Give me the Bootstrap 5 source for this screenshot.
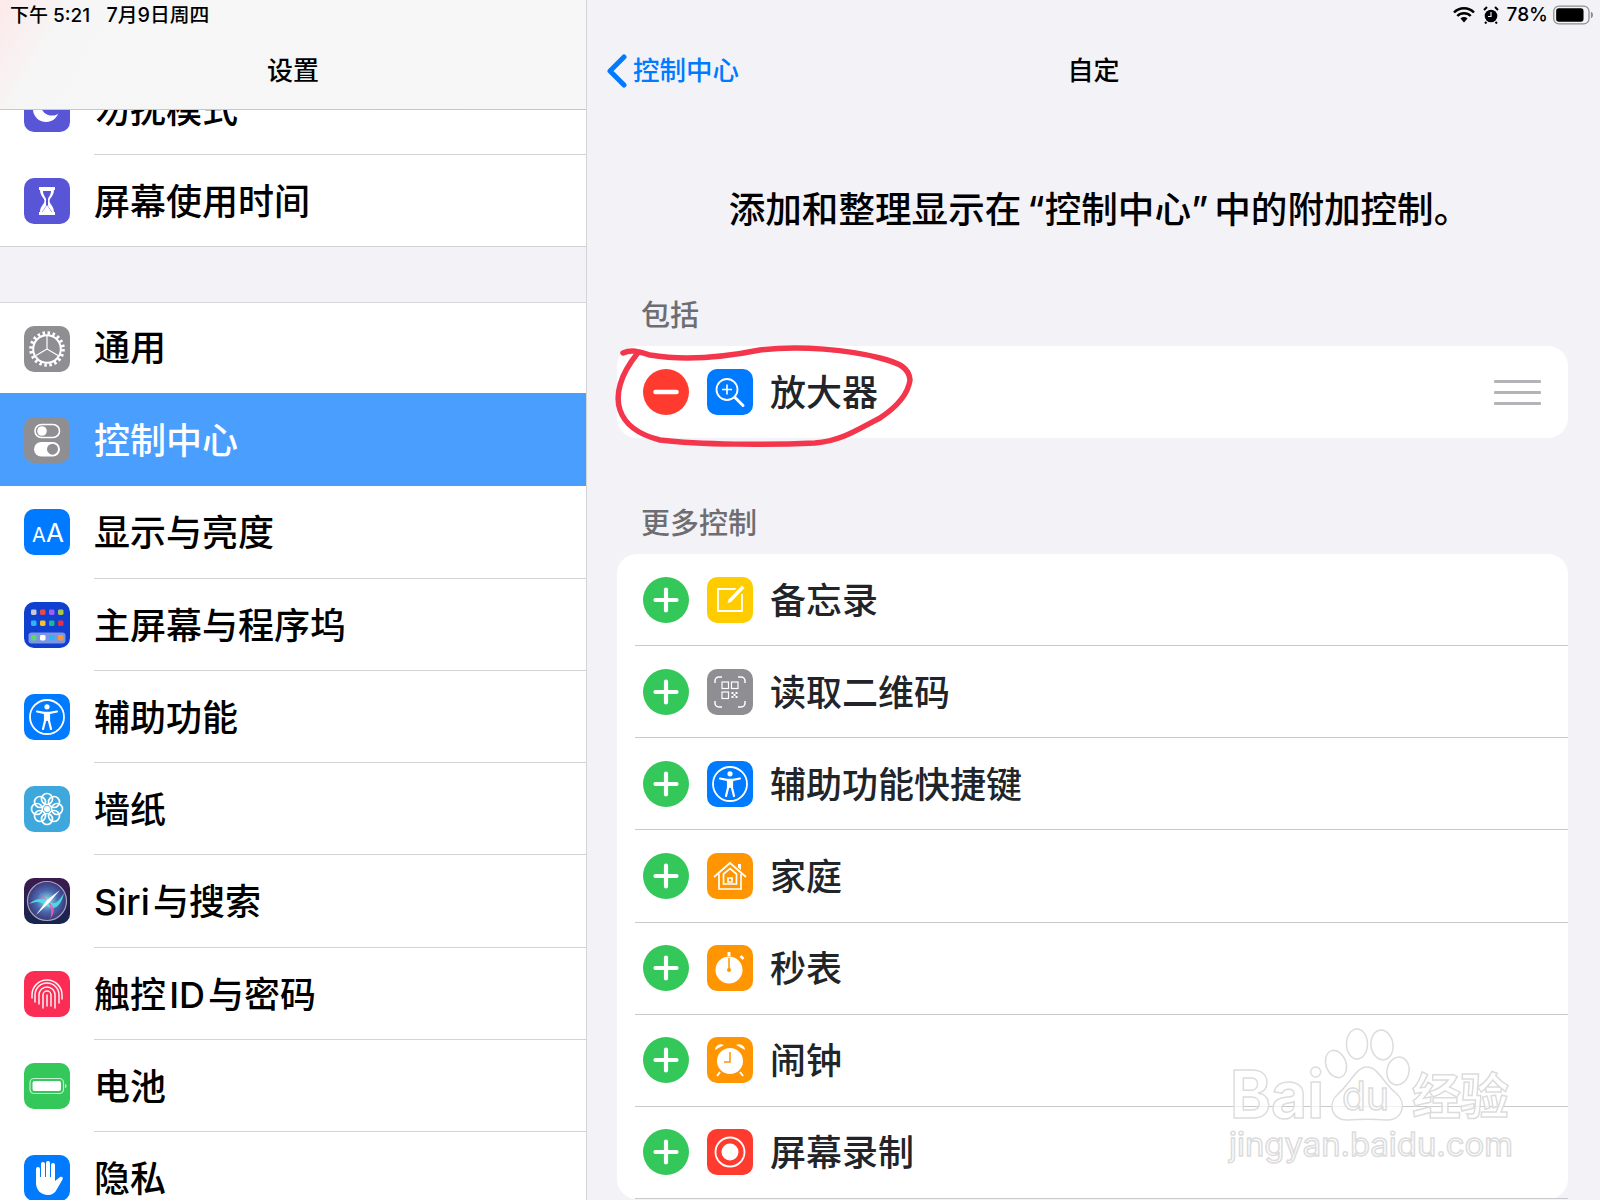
<!DOCTYPE html>
<html lang="zh-CN">
<head>
  <meta charset="UTF-8">
  <title>设置 - 控制中心</title>
  <link href="https://cdn.jsdelivr.net/npm/bootstrap@5.3.3/dist/css/bootstrap.min.css" rel="stylesheet">
  <style>
    html, body { height: 1200px; overflow: hidden; }
    body {
      font-family: Inter, "Noto Sans CJK SC", sans-serif;
      background: #f2f2f7;
      color: #000;
    }
    #ipad { width: 1600px; height: 1200px; }

    /* left pane */
    #left-pane { width: 587px; border-right: 1px solid #d3d3d8; }
    #left-head {
      height: 110px;
      background: linear-gradient(120deg, #fde9ea 0, #f6f6f6 12%, #f7f7f7 100%);
      border-bottom: 1px solid #c8c8cc;
      z-index: 2;
    }
    .stat-bar { height: 30px; font-size: 19px; line-height: 30px; font-weight: 500; }
    #stat-left { padding-left: 10px; }
    #stat-date { font-size: 19.8px; margin-left: 1px; }
    .nav-title { font-size: 26px; font-weight: 500; line-height: 81px; }
    #left-list { margin-top: -47px; }
    .set-group { background: #fff; border-radius: 0; }
    .set-group.first-group { border-bottom: 1px solid #d0d0d4; }
    .set-group.second-group { border-top: 1px solid #d8d8dc; margin-top: 55px; }
    .set-row.list-group-item {
      height: 92.25px;
      padding: 0 0 0 24px;
      border: 0;
      background: transparent;
      color: #000;
      font-size: 36px;
      font-weight: 500;
    }
    .set-row.short-row.list-group-item { height: 91px; }
    .second-group .short-row .set-text { line-height: 90px; }
    .set-row.list-group-item.active { background: #4a9ffe; color: #fff; height: 93px; }
    .active .set-text { line-height: 96px; }
    .set-icon, .app-icon { width: 46px; height: 46px; flex: none; display: block; }
    .set-text {
      margin-left: 24px;
      height: 100%;
      line-height: 95px;
      border-bottom: 1px solid #d4d4d8;
    }
    .no-sep { border-bottom: 0; }

    /* right pane */
    #back-link { color: #007aff; font-size: 26.5px; font-weight: 500; text-decoration: none; line-height: 81px; gap: 5px; padding-left: 19px; }
    #right-nav { display: grid; grid-template-columns: 1fr auto 1fr; }
    #stat-right { padding-right: 7px; gap: 8px; }
    #stat-right span { margin-right: -3px; }
    #desc { font-size: 36.6px; font-weight: 500; line-height: 50px; margin: 74px 0 61px; padding-left: 12px; text-align: center; }
    .quote-l { margin-left: 6px; }
    .quote-r { margin-right: 6px; }
    .sec-label { font-size: 29px; font-weight: 500; line-height: 40px; color: #6d6d72; margin: 0 0 10px 30px; padding-left: 24px; }
    .ctl-card {
      margin: 0 32px 0 30px;
      background: #fff;
      border-radius: 20px;
    }
    .ctl-card + .sec-label { margin-top: 66px; margin-bottom: 10px; }
    .ctl-row.list-group-item {
      height: 92.15px;
      margin-left: 18px;
      padding: 0 27px 0 8px;
      border: 0;
      border-bottom: 1px solid #c9c9cd;
      background: transparent;
      font-size: 36px;
      font-weight: 500;
      gap: 18px;
      border-radius: 0;
    }
    .ctl-row span { position: relative; top: 1px; left: -1px; }
    .ctl-row.no-line.list-group-item { border-bottom: 0; height: 92px; }
    .round-btn { width: 46px; height: 46px; flex: none; display: block; }
    #drag { width: 47px; margin-left: auto; }
    #drag i { display: block; height: 3px; background: #b4b4b8; margin: 8px 0; border-radius: 1px; }

    #overlay { position: absolute; left: 0; top: 0; z-index: 5; pointer-events: none; }
    .wm-text { fill: rgba(255,255,255,.72); stroke: #dcdcdc; stroke-width: 1.5; font-family: Inter, "Noto Sans CJK SC", sans-serif; }
  </style>
</head>
<body>

<svg width="0" height="0" class="d-block">
  <defs>
    <symbol id="a11y" viewBox="0 0 46 46">
      <rect width="46" height="46" rx="10" fill="#007aff"/>
      <circle cx="23" cy="23" r="17" fill="none" stroke="#fff" stroke-width="1.8"/>
      <circle cx="23" cy="12.8" r="2.6" fill="#fff"/>
      <path d="M13 17.5l7 1.3h6l7-1.3M23 19v7M21 19v8l-2 8M25 19v8l2 8" fill="none" stroke="#fff" stroke-width="2.2" stroke-linecap="round" stroke-linejoin="round"/>
    </symbol>
    <symbol id="plus" viewBox="0 0 46 46">
      <circle cx="23" cy="23" r="23" fill="#34c759"/>
      <path d="M23 12.5v21M12.5 23h21" stroke="#fff" stroke-width="4.2" stroke-linecap="round"/>
    </symbol>
    <radialGradient id="siriGlow" cx="50%" cy="50%" r="55%">
      <stop offset="0" stop-color="#8fe8ee"/><stop offset=".5" stop-color="#4a6ab0"/><stop offset="1" stop-color="#3a2a6a"/>
    </radialGradient>
    <linearGradient id="siriBg" x1="0" y1="0" x2="0" y2="1">
      <stop offset="0" stop-color="#3b1b4f"/><stop offset="1" stop-color="#16254d"/>
    </linearGradient>
  </defs>
</svg>

<div id="ipad" class="d-flex">

  <!-- settings list -->
  <div id="left-pane" class="d-flex flex-column overflow-hidden flex-shrink-0">
    <div id="left-head" class="position-relative flex-shrink-0">
      <div id="stat-left" class="stat-bar">下午 5:21 &nbsp; <span id="stat-date">7月9日周四</span></div>
      <div class="nav-title text-center">设置</div>
    </div>
    <div id="left-list">
      <div class="list-group set-group first-group">
        <div class="list-group-item set-row d-flex align-items-center">
          <svg class="set-icon" viewBox="0 0 46 46"><rect width="46" height="46" rx="10" fill="#5856d6"/><circle cx="22" cy="23" r="13" fill="#fff"/><circle cx="28" cy="18" r="11.5" fill="#5856d6"/></svg>
          <div class="set-text flex-grow-1">勿扰模式</div>
        </div>
        <div class="list-group-item set-row short-row d-flex align-items-center">
          <svg class="set-icon" viewBox="0 0 46 46"><rect width="46" height="46" rx="10" fill="#5856d6"/><path d="M15 9h16v3h-1c0 6-4.500 8-4.500 11s4.500 5 4.500 11h1v3H15v-3h1c0-6 4.500-8 4.500-11S16 18 16 12h-1z" fill="#fff"/><path d="M19 13h8c0 4-2.500 6-3 8v7l4 6h-10l4-6v-7c-.5-2-3-4-3-8z" fill="#5856d6"/><path d="M23 27l4.500 7h-9z" fill="#fff"/></svg>
          <div class="set-text flex-grow-1 no-sep">屏幕使用时间</div>
        </div>
      </div>
      <div class="list-group set-group second-group">
        <div class="list-group-item set-row short-row d-flex align-items-center">
          <svg class="set-icon" viewBox="0 0 46 46"><rect width="46" height="46" rx="10" fill="#8e8e93"/><circle cx="23" cy="23" r="16" fill="none" stroke="#fff" stroke-width="3.600" stroke-dasharray="2.500 2.530"/><circle cx="23" cy="23" r="13.800" fill="none" stroke="#fff" stroke-width="2"/><path d="M23 23V10M23 23l11 6.500M23 23l-11 6.500" stroke="#fff" stroke-width="1.200"/></svg>
          <div class="set-text flex-grow-1 no-sep">通用</div>
        </div>
        <div class="list-group-item set-row active d-flex align-items-center">
          <svg class="set-icon" viewBox="0 0 46 46"><rect width="46" height="46" rx="10" fill="#8e8e93"/><rect x="11" y="7.500" width="24.500" height="13" rx="6.500" fill="none" stroke="#fff" stroke-width="1.600"/><circle cx="18" cy="14" r="4.800" fill="#fff"/><rect x="10" y="25" width="26" height="14.500" rx="7.200" fill="#fff"/><circle cx="28.500" cy="32.200" r="5.500" fill="#8e8e93"/></svg>
          <div class="set-text flex-grow-1 no-sep">控制中心</div>
        </div>
        <div class="list-group-item set-row d-flex align-items-center">
          <svg class="set-icon" viewBox="0 0 46 46"><rect width="46" height="46" rx="10" fill="#007aff"/><text x="8" y="33" font-size="20" font-weight="400" fill="#fff" font-family="Inter">A</text><text x="22" y="33" font-size="26" font-weight="400" fill="#fff" font-family="Inter">A</text></svg>
          <div class="set-text flex-grow-1">显示与亮度</div>
        </div>
        <div class="list-group-item set-row d-flex align-items-center">
          <svg class="set-icon" viewBox="0 0 46 46"><rect width="46" height="46" rx="10" fill="#1040cf"/>
            <rect x="7" y="7.500" width="5.500" height="5.500" rx="1.400" fill="#c9c9d2"/><rect x="16" y="7.500" width="5.500" height="5.500" rx="1.400" fill="#e5484d"/><rect x="25" y="7.500" width="5.500" height="5.500" rx="1.400" fill="#a55bf5"/><rect x="34" y="7.500" width="5.500" height="5.500" rx="1.400" fill="#a7c94a"/>
            <rect x="7" y="18.500" width="5.500" height="5.500" rx="1.400" fill="#2ab6f5"/><rect x="16" y="18.500" width="5.500" height="5.500" rx="1.400" fill="#f6c026"/><rect x="25" y="18.500" width="5.500" height="5.500" rx="1.400" fill="#20b48f"/><rect x="34" y="18.500" width="5.500" height="5.500" rx="1.400" fill="#e5304a"/>
            <rect x="4.500" y="30.500" width="37" height="11" rx="3" fill="#7d95e4"/>
            <rect x="7" y="33" width="5.500" height="5.500" rx="1.400" fill="#5bd964"/><rect x="16" y="33" width="5.500" height="5.500" rx="1.400" fill="#fff"/><rect x="25" y="33" width="5.500" height="5.500" rx="1.400" fill="#27b5f5"/><rect x="34" y="33" width="5.500" height="5.500" rx="1.400" fill="#f59a3c"/></svg>
          <div class="set-text flex-grow-1">主屏幕与程序坞</div>
        </div>
        <div class="list-group-item set-row d-flex align-items-center">
          <svg class="set-icon"><use href="#a11y"/></svg>
          <div class="set-text flex-grow-1">辅助功能</div>
        </div>
        <div class="list-group-item set-row d-flex align-items-center">
          <svg class="set-icon" viewBox="0 0 46 46"><rect width="46" height="46" rx="10" fill="#3ea8dc"/><g fill="none" stroke="#fff" stroke-width="1.700"><circle cx="23" cy="13" r="5.500"/><circle cx="30" cy="16" r="5.500"/><circle cx="33" cy="23" r="5.500"/><circle cx="30" cy="30" r="5.500"/><circle cx="23" cy="33" r="5.500"/><circle cx="16" cy="30" r="5.500"/><circle cx="13" cy="23" r="5.500"/><circle cx="16" cy="16" r="5.500"/></g><circle cx="23" cy="23" r="3" fill="#fff"/></svg>
          <div class="set-text flex-grow-1">墙纸</div>
        </div>
        <div class="list-group-item set-row d-flex align-items-center">
          <svg class="set-icon" viewBox="0 0 46 46"><rect width="46" height="46" rx="10" fill="url(#siriBg)"/><circle cx="23" cy="23" r="19.500" fill="url(#siriGlow)" stroke="#a3a7bd" stroke-width="1.200"/><path d="M5 26c7-6 12-6 18-3s9 5 17-8c-2 11-9 19-17 13s-12-4-18-2z" fill="#4fe0e8" opacity=".9"/><path d="M13 8c3 8 7 11 10 15s6 11 3 18c8-9 2-15-3-18S16 15 13 8z" fill="#ee5bb0" opacity=".9"/><path d="M36 12L23 22 12 37l13-12z" fill="#fff"/></svg>
          <div class="set-text flex-grow-1">Siri&#8202;与搜索</div>
        </div>
        <div class="list-group-item set-row d-flex align-items-center">
          <svg class="set-icon" viewBox="0 0 46 46"><rect width="46" height="46" rx="10" fill="#fb2d55"/><g fill="none" stroke="#fff" stroke-width="1.500" stroke-linecap="round" opacity=".95"><path d="M23 24v11"/><path d="M19 37V24a4 4 0 0 1 8 0v11"/><path d="M15 33V24a8 8 0 0 1 16 0v13"/><path d="M11 31V24a12 12 0 0 1 24 0v8"/><path d="M8 27V24a15 15 0 0 1 30 0v4"/></g></svg>
          <div class="set-text flex-grow-1">触控&#8202;ID&#8202;与密码</div>
        </div>
        <div class="list-group-item set-row d-flex align-items-center">
          <svg class="set-icon" viewBox="0 0 46 46"><rect width="46" height="46" rx="10" fill="#34c759"/><rect x="6" y="15.500" width="33.500" height="15" rx="4" fill="none" stroke="#c5efd0" stroke-width="1.200"/><rect x="8.500" y="18" width="28.500" height="10" rx="2" fill="#fff"/><path d="M41 21v4c1 0 1.500-1 1.500-2s-.5-2-1.500-2z" fill="#c5efd0"/></svg>
          <div class="set-text flex-grow-1">电池</div>
        </div>
        <div class="list-group-item set-row d-flex align-items-center">
          <svg class="set-icon" viewBox="0 0 46 46"><rect width="46" height="46" rx="10" fill="#007aff"/><path d="M14 14v14M19 9v16M24 8v17M29 10v16" stroke="#fff" stroke-width="4" stroke-linecap="round"/><path d="M12 22h19v4l5-4c2-1 3.500.5 2.500 2.500L33 34c-2 4-5 6-9 6-7 0-12-5-12-12z" fill="#fff"/></svg>
          <div class="set-text flex-grow-1 no-sep">隐私</div>
        </div>
      </div>
    </div>
  </div>

  <!-- custom controls -->
  <div class="flex-grow-1 overflow-hidden">
    <div id="stat-right" class="stat-bar d-flex justify-content-end align-items-center">
      <svg width="22" height="16" viewBox="0 0 22 16"><path d="M1 5.500a14 14 0 0 1 20 0M4.300 9a9.300 9.300 0 0 1 13.400 0" fill="none" stroke="#000" stroke-width="2.500"/><path d="M7.500 11.500a5 5 0 0 1 7 0L11 15.500z" fill="#000"/></svg>
      <svg width="16" height="18" viewBox="0 0 16 18"><circle cx="8" cy="10" r="6.300" fill="#000"/><path d="M1 4l3-3M15 4l-3-3M3.500 16l-1.500 1.500M12.500 16l1.500 1.500" stroke="#000" stroke-width="2"/><path d="M8 6v4.500H5" fill="none" stroke="#f2f2f7" stroke-width="1.200"/></svg>
      <span>78%</span>
      <svg width="40" height="20" viewBox="0 0 38 19"><rect x=".7" y="1" width="33.500" height="17" rx="5" fill="none" stroke="#8e8e93" stroke-width="1.200"/><rect x="3" y="3.200" width="26" height="12.600" rx="2.500" fill="#000"/><path d="M36 6.500v6c1.300-.4 2-1.600 2-3s-.7-2.600-2-3z" fill="#8e8e93"/></svg>
    </div>
    <div id="right-nav">
      <a id="back-link" class="d-flex align-items-center" href="#">
        <svg width="22" height="34" viewBox="0 0 22 34"><path d="M18 3L4 17l14 14" fill="none" stroke="#007aff" stroke-width="5" stroke-linecap="round" stroke-linejoin="round"/></svg>
        <span>控制中心</span>
      </a>
      <div class="nav-title">自定</div>
      <div></div>
    </div>

    <div id="desc">添加和整理显示在<span class="quote-l">“</span>控制中心<span class="quote-r">”</span>中的附加控制。</div>

    <div class="sec-label">包括</div>
    <div class="list-group ctl-card">
      <div class="list-group-item ctl-row no-line d-flex align-items-center">
        <svg class="round-btn" viewBox="0 0 46 46"><circle cx="23" cy="23" r="23" fill="#ff3b30"/><path d="M12.500 23h21" stroke="#fff" stroke-width="4.500" stroke-linecap="round"/></svg>
        <svg class="app-icon" viewBox="0 0 46 46"><rect width="46" height="46" rx="10" fill="#007aff"/><circle cx="20" cy="20.500" r="10.500" fill="none" stroke="#fff" stroke-width="1.800"/><path d="M20 15.500v10M15 20.500h10" stroke="#fff" stroke-width="1.600"/><path d="M28 28.500l8 8" stroke="#fff" stroke-width="3" stroke-linecap="round"/></svg>
        <span>放大器</span>
        <div id="drag"><i></i><i></i><i></i></div>
      </div>
    </div>

    <div class="sec-label">更多控制</div>
    <div class="list-group ctl-card">
      <div class="list-group-item ctl-row d-flex align-items-center">
        <svg class="round-btn"><use href="#plus"/></svg>
        <svg class="app-icon" viewBox="0 0 46 46"><rect width="46" height="46" rx="10" fill="#ffcc00"/><path d="M30 12H11v22h24V17" fill="none" stroke="#fff" stroke-width="1.800"/><path d="M20 26l15-16" stroke="#ffcc00" stroke-width="6.500"/><path d="M20.500 26l1-3.500L35 8.500l2.500 2.500L24 25z" fill="#fff"/></svg>
        <span>备忘录</span>
      </div>
      <div class="list-group-item ctl-row d-flex align-items-center">
        <svg class="round-btn"><use href="#plus"/></svg>
        <svg class="app-icon" viewBox="0 0 46 46"><rect width="46" height="46" rx="10" fill="#8e8e93"/><path d="M8 14v-2c0-2 1.500-4 4-4h3M31 8h3c2.500 0 4 2 4 4v2M38 32v2c0 2-1.500 4-4 4h-3M15 38h-3c-2.500 0-4-2-4-4v-2" fill="none" stroke="#fff" stroke-width="1.500"/><g fill="none" stroke="#fff" stroke-width="1.200"><rect x="15" y="13" width="6.500" height="6.500"/><rect x="24.500" y="13" width="6.500" height="6.500"/><rect x="15" y="23" width="6.500" height="6.500"/></g><path d="M24.500 23h2v2h-2zM28.500 23h2v2h-2zM26.500 25h2v2h-2zM24.500 27h2v2h-2zM28.500 27h2v2h-2z" fill="#fff"/></svg>
        <span>读取二维码</span>
      </div>
      <div class="list-group-item ctl-row d-flex align-items-center">
        <svg class="round-btn"><use href="#plus"/></svg>
        <svg class="app-icon"><use href="#a11y"/></svg>
        <span>辅助功能快捷键</span>
      </div>
      <div class="list-group-item ctl-row d-flex align-items-center">
        <svg class="round-btn"><use href="#plus"/></svg>
        <svg class="app-icon" viewBox="0 0 46 46"><rect width="46" height="46" rx="10" fill="#ff9500"/><g fill="none" stroke="#fff" stroke-width="1.700"><path d="M7 24L23 10l16 14"/><path d="M12 21v15h22V21"/><path d="M16.500 21L23 15.500 29.500 21v10h-13z"/><path d="M21 29v-4h4v4z"/></g><path d="M31 11h3v6l-3-2.500z" fill="#fff"/></svg>
        <span>家庭</span>
      </div>
      <div class="list-group-item ctl-row d-flex align-items-center">
        <svg class="round-btn"><use href="#plus"/></svg>
        <svg class="app-icon" viewBox="0 0 46 46"><rect width="46" height="46" rx="10" fill="#ff9500"/><circle cx="22" cy="25" r="13.500" fill="#fff"/><rect x="20.500" y="7" width="3" height="4" fill="#fff"/><path d="M33.500 11l3 3" stroke="#fff" stroke-width="2.500"/><path d="M22 13v12" stroke="#ff9500" stroke-width="1.500"/><circle cx="22" cy="25" r="2" fill="#ff9500"/></svg>
        <span>秒表</span>
      </div>
      <div class="list-group-item ctl-row d-flex align-items-center">
        <svg class="round-btn"><use href="#plus"/></svg>
        <svg class="app-icon" viewBox="0 0 46 46"><rect width="46" height="46" rx="10" fill="#ff9500"/><circle cx="23" cy="24" r="13" fill="#fff"/><path d="M8 13a6 6 0 0 1 9-5zM38 13a6 6 0 0 0-9-5z" fill="#fff"/><path d="M13 35l-3 4M33 35l3 4" stroke="#fff" stroke-width="2"/><path d="M23 15v10h-6" fill="none" stroke="#ff9500" stroke-width="1.500"/></svg>
        <span>闹钟</span>
      </div>
      <div class="list-group-item ctl-row d-flex align-items-center">
        <svg class="round-btn"><use href="#plus"/></svg>
        <svg class="app-icon" viewBox="0 0 46 46"><rect width="46" height="46" rx="10" fill="#ff3b30"/><circle cx="23" cy="23" r="14.500" fill="none" stroke="#fff" stroke-width="1.800"/><circle cx="23" cy="23" r="8.500" fill="#fff"/></svg>
        <span>屏幕录制</span>
      </div>
    </div>
  </div>
</div>

<!-- hand drawn circle and baidu watermark lie over the screen -->
<svg id="overlay" width="1600" height="1200" viewBox="0 0 1600 1200">
  <path d="M623 353C632 349 640 352 650 355C680 360 720 358 760 350C800 345 850 350 880 358C900 363 909 368 910 380C908 395 895 408 880 418C860 428 842 441 815 443C770 445 700 445 660 440C640 435 625 425 620 410C615 395 620 375 637 354" fill="none" stroke="#f4364c" stroke-width="5.500" stroke-linecap="round"/>
  <g>
    <g class="wm-text">
      <ellipse cx="1357" cy="1044" rx="10.500" ry="15"/>
      <ellipse cx="1382" cy="1045" rx="11" ry="15" transform="rotate(-8 1382 1045)"/>
      <ellipse cx="1336" cy="1064" rx="10" ry="14" transform="rotate(-20 1336 1064)"/>
      <ellipse cx="1398" cy="1071" rx="11" ry="14" transform="rotate(12 1398 1071)"/>
      <path d="M1367 1067C1378 1067 1384 1084 1396 1093C1408 1104 1402 1121 1386 1120C1374 1119 1360 1119 1348 1120C1332 1121 1326 1104 1339 1093C1350 1084 1356 1067 1367 1067Z"/>
    </g>
    <text class="wm-text" x="1230" y="1118" font-size="66" font-weight="700" textLength="94" lengthAdjust="spacingAndGlyphs">Bai</text>
    <text class="wm-text" x="1342" y="1110" font-size="40" textLength="47" lengthAdjust="spacingAndGlyphs">du</text>
    <text class="wm-text" x="1412" y="1114" font-size="49" font-weight="700" textLength="97">经验</text>
    <text class="wm-text" x="1229" y="1156" font-size="33" stroke-width="1" textLength="284" lengthAdjust="spacingAndGlyphs">jingyan.baidu.com</text>
  </g>
</svg>

<script src="https://cdn.jsdelivr.net/npm/bootstrap@5.3.3/dist/js/bootstrap.bundle.min.js"></script>
</body>
</html>
